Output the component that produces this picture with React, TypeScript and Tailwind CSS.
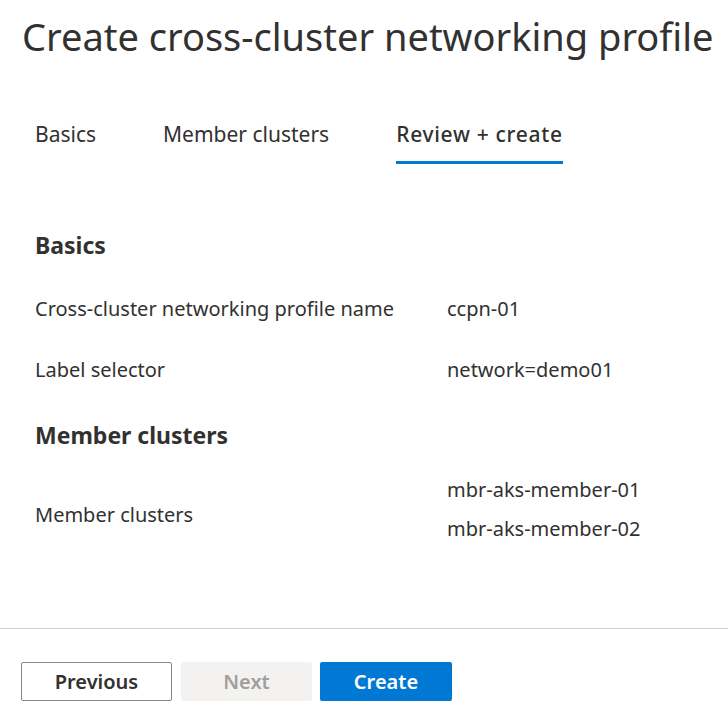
import React from 'react'

const font = { fontFamily: '"Noto Sans", "Open Sans", sans-serif' }

function Row({ label, values }: { label: string; values: string[] }): React.JSX.Element {
  const multi = values.length > 1
  return (
    <div className="flex items-center leading-[28px]">
      <div className={multi ? 'w-[412px] shrink-0 pt-[11px]' : 'w-[412px] shrink-0'}>{label}</div>
      <div className="flex flex-col gap-[11px]">
        {values.map((v) => (
          <div key={v}>{v}</div>
        ))}
      </div>
    </div>
  )
}

export default function App(): React.JSX.Element {
  return (
    <div className="w-[728px] h-[711px] bg-white text-[#323130] flex flex-col overflow-hidden" style={font}>
      {/* Header */}
      <h1 className="pl-[22px] pt-[10px] text-[38px] leading-[52px] whitespace-nowrap">
        Create cross-cluster networking profile
      </h1>

      {/* Tabs */}
      <div className="flex pl-[35px] mt-[58px] text-[21px] leading-[28px]">
        <div className="pb-[16px] mr-[67px]">Basics</div>
        <div className="pb-[16px] mr-[67px]">Member clusters</div>
        <div className="pb-[13px] border-b-[3px] border-[#0078d4] font-medium tracking-[0.7px]">Review + create</div>
      </div>

      {/* Review content */}
      <div className="pl-[35px] mt-[65px] text-[20px] flex flex-col">
        <h2 className="text-[23px] font-bold leading-[32px]">Basics</h2>
        <div className="mt-[34px]">
          <Row label="Cross-cluster networking profile name" values={['ccpn-01']} />
        </div>
        <div className="mt-[33px]">
          <Row label="Label selector" values={['network=demo01']} />
        </div>
        <h2 className="mt-[35px] text-[23px] font-bold leading-[32px]">Member clusters</h2>
        <div className="mt-[25px]">
          <Row label="Member clusters" values={['mbr-aks-member-01', 'mbr-aks-member-02']} />
        </div>
      </div>

      {/* Footer */}
      <div className="mt-auto border-t border-[#d2d0ce] pl-[21px] pt-[33px] pb-[10px] flex text-[20px]">
        <button className="w-[151px] h-[39px] rounded-[2px] border border-[#8a8886] font-semibold">
          Previous
        </button>
        <button className="ml-[9px] w-[131px] h-[39px] rounded-[2px] bg-[#f3f2f1] text-[#a19f9d] font-semibold" disabled>
          Next
        </button>
        <button className="ml-[8px] w-[132px] h-[39px] rounded-[2px] bg-[#0078d4] text-white font-semibold">
          Create
        </button>
      </div>
    </div>
  )
}
